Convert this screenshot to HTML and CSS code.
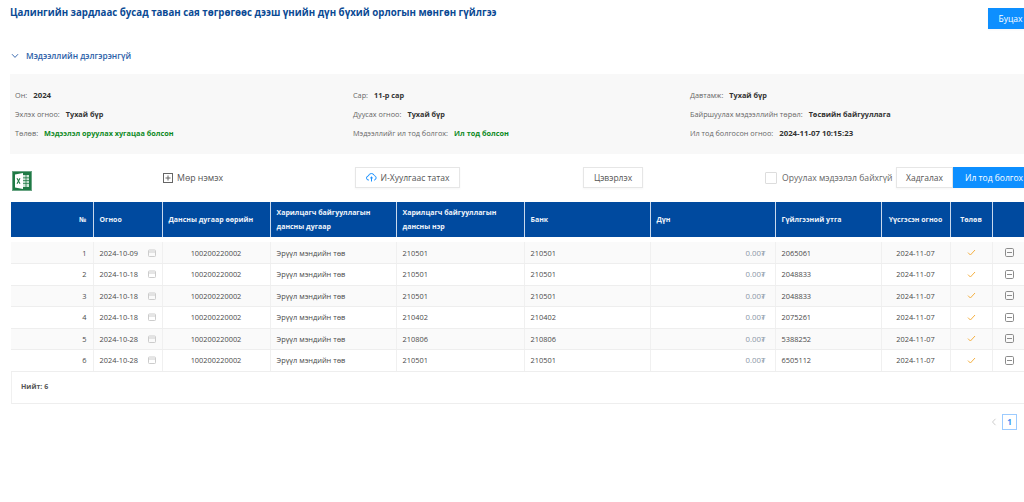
FILE: index.html
```html
<!DOCTYPE html>
<html lang="mn">
<head>
    <meta charset="UTF-8">
    <title>Цалингийн зардлаас бусад</title>
    <link rel="stylesheet" href="styles.css">
</head>
<body>
<div class="page">
    <div class="title-row">
        <h1>Цалингийн зардлаас бусад таван сая төгрөгөөс дээш үнийн дүн бүхий орлогын мөнгөн гүйлгээ</h1>
        <button class="btn btn-primary back-btn">Буцах</button>
    </div>

    <div class="collapse-head">
        <svg class="chevron" width="8" height="6" viewBox="0 0 8 6"><path d="M1 1.2 L4 4.4 L7 1.2" fill="none" stroke="#2a5ea8" stroke-width="0.9"/></svg>
        <span>Мэдээллийн дэлгэрэнгүй</span>
    </div>

    <div class="info-panel">
        <div class="info-item"><span class="lbl">Он:</span><b class="num">2024</b></div>
        <div class="info-item"><span class="lbl">Сар:</span><b>11-р сар</b></div>
        <div class="info-item"><span class="lbl">Давтамж:</span><b>Тухай бүр</b></div>
        <div class="info-item"><span class="lbl">Эхлэх огноо:</span><b>Тухай бүр</b></div>
        <div class="info-item"><span class="lbl">Дуусах огноо:</span><b>Тухай бүр</b></div>
        <div class="info-item"><span class="lbl">Байршуулах мэдээллийн төрөл:</span><b>Төсвийн байгууллага</b></div>
        <div class="info-item"><span class="lbl">Төлөв:</span><b class="green">Мэдээлэл оруулах хугацаа болсон</b></div>
        <div class="info-item"><span class="lbl">Мэдээллийг ил тод болгох:</span><b class="green">Ил тод болсон</b></div>
        <div class="info-item"><span class="lbl">Ил тод болгосон огноо:</span><b class="num">2024-11-07 10:15:23</b></div>
    </div>

    <div class="toolbar">
        <svg class="excel" width="20" height="20" viewBox="0 0 20 20">
            <rect x="0.5" y="0.5" width="19" height="19" fill="#1f7a45" stroke="#6aa584"/>
            <rect x="11" y="4" width="6" height="12" fill="#cfe6d8"/>
            <path d="M11 6.8h6M11 9.6h6M11 12.4h6M14 4v12" stroke="#1f7a45" stroke-width="0.8"/>
            <path d="M3 3.5 11 2v16l-8-1.5z" fill="#fff"/>
            <path d="M5 7.2l3 5.6M8 7.2l-3 5.6" stroke="#1f7a45" stroke-width="1.1"/>
        </svg>
        <span class="add-row">
            <svg width="10" height="10" viewBox="0 0 10 10"><rect x="0.5" y="0.5" width="9" height="9" fill="none" stroke="#666"/><path d="M5 2.5v5M2.5 5h5" stroke="#666"/></svg>
            Мөр нэмэх
        </span>
        <button class="btn import-btn">
            <svg width="11" height="9" viewBox="0 0 11 9"><path d="M3 7H2.6A2 2 0 0 1 2.4 3 3.1 3.1 0 0 1 8.4 2.7 2.2 2.2 0 0 1 8.4 7H8M5.5 4v4.5M4.2 5.2 5.5 4l1.3 1.2" fill="none" stroke="#1890ff"/></svg>
            И-Хуулгаас татах
        </button>
        <button class="btn clear-btn">Цэвэрлэх</button>
        <label class="no-data"><span class="checkbox"></span>Оруулах мэдээлэл байхгүй</label>
        <div class="btn-group">
            <button class="btn save-btn">Хадгалах</button>
            <button class="btn btn-primary publish-btn">Ил тод болгох</button>
        </div>
    </div>

    <table class="grid">
        <colgroup>
            <col class="c-no"><col class="c-date"><col class="c-acc"><col class="c-cacc"><col class="c-cname">
            <col class="c-bank"><col class="c-amt"><col class="c-desc"><col class="c-created"><col class="c-status"><col class="c-act">
        </colgroup>
        <thead>
            <tr>
                <th class="right">№</th>
                <th>Огноо</th>
                <th>Дансны дугаар өөрийн</th>
                <th>Харилцагч байгууллагын<br>дансны дугаар</th>
                <th>Харилцагч байгууллагын<br>дансны нэр</th>
                <th>Банк</th>
                <th>Дүн</th>
                <th>Гүйлгээний утга</th>
                <th class="center">Үүсгэсэн огноо</th>
                <th class="center">Төлөв</th>
                <th></th>
            </tr>
        </thead>
        <tbody id="rows"></tbody>
    </table>
    <div class="total">Нийт: 6</div>

    <div class="pager">
        <svg width="6" height="8" viewBox="0 0 6 8"><path d="M4.5 .8 1.5 4l3 3.2" fill="none" stroke="#ccc"/></svg>
        <span class="page-no">1</span>
    </div>
</div>
<script src="rows.js"></script>
</body>
</html>
```

FILE: rows.js
```js
// table rows
const data = [
    ['2024-10-09', '210501', '2065061'],
    ['2024-10-18', '210501', '2048833'],
    ['2024-10-18', '210501', '2048833'],
    ['2024-10-18', '210402', '2075261'],
    ['2024-10-28', '210806', '5388252'],
    ['2024-10-28', '210501', '6505112']
];

const calIcon = '<svg width="8" height="8" viewBox="0 0 8 8"><rect x=".5" y="1" width="7" height="6.5" rx=".8" fill="none" stroke="#ccc"/><path d="M.5 3h7" stroke="#ccc"/></svg>';
const checkIcon = '<svg class="mid" width="9" height="7" viewBox="0 0 9 7"><path d="M1 3.6 3.4 6 8 1" fill="none" stroke="#f5b041" stroke-width="1"/></svg>';
const minusIcon = '<svg width="9" height="9" viewBox="0 0 9 9"><rect x=".5" y=".5" width="8" height="8" rx="1.2" fill="none" stroke="#8c8c8c"/><path d="M2 4.5h5" stroke="#8c8c8c"/></svg>';

document.getElementById('rows').innerHTML = data.map((r, i) => `
    <tr>
        <td class="right">${i + 1}</td>
        <td><div class="date-cell">${r[0]}${calIcon}</div></td>
        <td class="center">100200220002</td>
        <td>Эрүүл мэндийн төв</td>
        <td>${r[1]}</td>
        <td>${r[1]}</td>
        <td class="right amount">0.00₮</td>
        <td>${r[2]}</td>
        <td class="center">2024-11-07</td>
        <td class="center">${checkIcon}</td>
        <td class="action">${minusIcon}</td>
    </tr>`).join('');
```

FILE: styles.css
```css
html, body {
    margin: 0;
    height: 502px;
    overflow: hidden;
    background-color: #fff;
    font-family: "Open Sans", "Noto Sans", Arial, sans-serif;
    font-size: 8px;
    color: #444;
}

.page {
    width: 1025px;
    margin-left: 10px;
}

.title-row {
    display: flex;
    justify-content: space-between;
    align-items: flex-start;
    height: 45px;
    padding-top: 8px;
    box-sizing: border-box;
}

h1 {
    margin: -1px 0 0;
    font-size: 9.7px;
    line-height: 11px;
    font-weight: 700;
    color: #0b4a94;
}

.btn {
    font-family: inherit;
    background-color: #fff;
    border: 1px solid #e6e6e6;
    color: #555;
    font-size: 8.5px;
    height: 21px;
    padding: 0;
    box-shadow: 0 1px 2px rgba(0, 0, 0, 0.04);
}

.btn-primary {
    background-color: #0d8fff;
    border-color: #0d8fff;
    color: #fff;
}

.back-btn {
    width: 47px;
    padding-right: 2px;
}

.collapse-head {
    display: flex;
    align-items: center;
    gap: 7px;
    height: 21px;
    padding-left: 1px;
    margin-bottom: 8px;
    font-size: 8.3px;
    font-weight: 600;
    color: #2a5ea8;
}

.info-panel {
    display: grid;
    grid-template-columns: 338px 337px 1fr;
    grid-auto-rows: 19px;
    align-items: center;
    height: 80px;
    box-sizing: border-box;
    padding: 11px 0 11px 5px;
    background-color: #f8f8f8;
    font-size: 7.3px;
}

.info-item .lbl {
    margin-right: 6px;
    color: #666;
}

.info-item b {
    font-weight: 700;
    color: #333;
}

.info-item b.green {
    color: #0d8a1f;
}

.info-item b.num {
    font-size: 7.8px;
}

.toolbar {
    display: flex;
    align-items: flex-start;
    height: 35px;
    margin-top: 13px;
    font-size: 8.6px;
}

.excel {
    margin: 4px 0 0 2px;
}

.add-row {
    display: flex;
    align-items: center;
    gap: 4px;
    height: 21px;
    margin-left: 131px;
    width: 192px;
    color: #555;
    font-size: 8.8px;
}

.import-btn {
    display: flex;
    align-items: center;
    justify-content: center;
    gap: 4px;
    width: 105px;
}

.clear-btn {
    width: 60px;
    margin-left: 123px;
}

.no-data {
    display: flex;
    align-items: center;
    gap: 5px;
    height: 21px;
    margin-left: 122px;
    width: 131px;
    color: #666;
}

.checkbox {
    width: 10px;
    height: 10px;
    border: 1px solid #ddd;
    border-radius: 1px;
    background-color: #fff;
}

.btn-group {
    display: flex;
}

.save-btn {
    width: 57px;
}

.publish-btn {
    width: 82px;
}

.grid {
    table-layout: fixed;
    border-collapse: collapse;
    width: 1024px;
    margin-left: 1px;
}

.c-no { width: 82px; }
.c-date { width: 69px; }
.c-acc { width: 108px; }
.c-cacc { width: 126px; }
.c-cname { width: 128px; }
.c-bank { width: 126px; }
.c-amt { width: 125px; }
.c-desc { width: 106px; }
.c-created { width: 69px; }
.c-status { width: 42px; }

.grid thead th {
    height: 35px;
    padding: 0 6px;
    box-sizing: border-box;
    background-color: #004a9f;
    border-right: 1px solid #c8d8ec;
    color: #eef3fa;
    font-size: 7px;
    line-height: 13.5px;
    font-weight: 700;
    text-align: left;
    white-space: nowrap;
}

.grid tbody::before {
    content: "";
    display: table-row;
    height: 5px;
}

.grid tbody td {
    height: 21.5px;
    padding: 0 6px;
    box-sizing: border-box;
    border-right: 1px solid #f0f0f0;
    border-bottom: 1px solid #eee;
    font-size: 7.4px;
    color: #4a4a4a;
    white-space: nowrap;
}

.grid tbody tr:nth-child(odd) td {
    background-color: #fafafa;
}

.grid th.right, .grid td.right {
    text-align: right;
}

.grid th.center, .grid td.center {
    text-align: center;
}

.grid td svg {
    display: block;
}

.grid td svg.mid {
    margin: 0 auto;
}

.grid td.amount {
    color: #8a97a6;
    font-size: 7.8px;
    padding-right: 9px;
}

.grid td.action {
    padding-left: 12px;
}

.date-cell {
    display: flex;
    justify-content: space-between;
    align-items: center;
}

.total {
    height: 32px;
    margin-left: 1px;
    padding: 10px 0 0 9px;
    box-sizing: border-box;
    border-left: 1px solid #f0f0f0;
    border-bottom: 1px solid #eee;
    font-size: 7px;
    font-weight: 700;
    color: #555;
}

.pager {
    display: flex;
    align-items: center;
    justify-content: flex-end;
    gap: 5px;
    margin-top: 10px;
    padding-right: 18px;
}

.page-no {
    width: 13px;
    height: 14px;
    line-height: 14px;
    text-align: center;
    border: 1px solid #9ccbff;
    font-weight: 700;
    font-size: 8px;
    color: #3b8ff0;
}
```
